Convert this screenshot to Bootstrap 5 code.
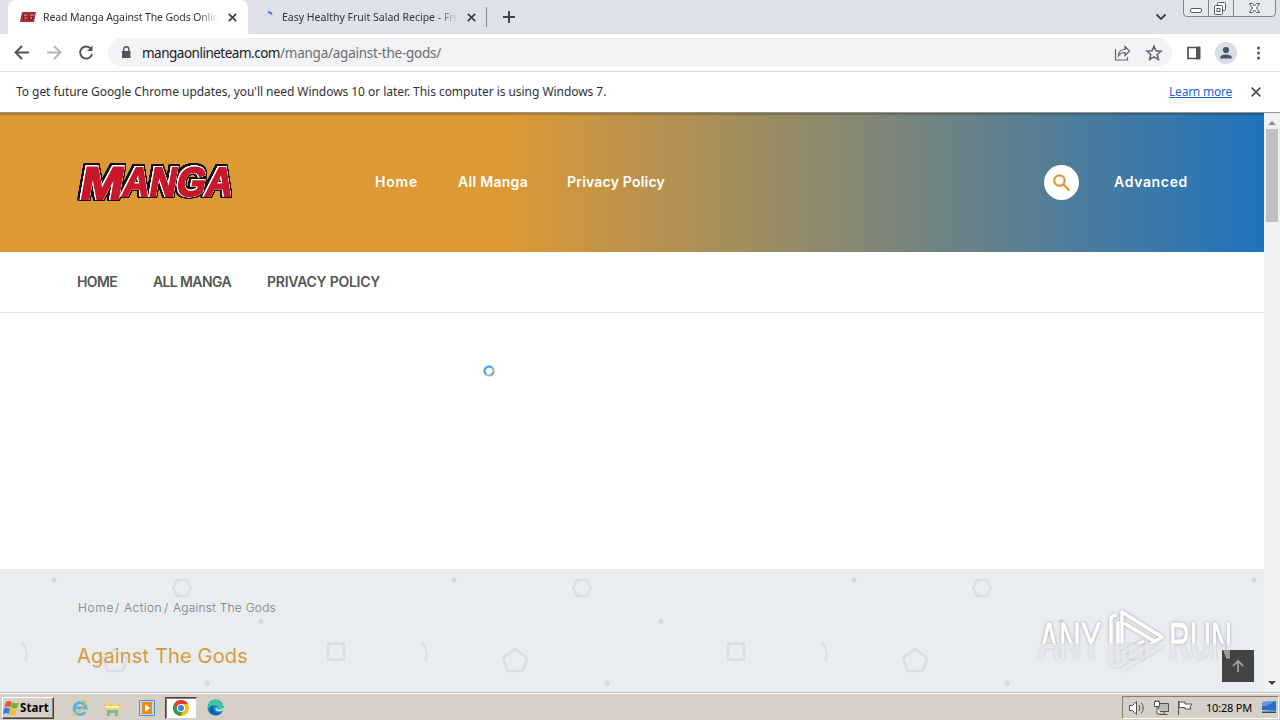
<!DOCTYPE html>
<html lang="en">
<head>
<meta charset="utf-8">
<meta name="viewport" content="width=device-width, initial-scale=1">
<title>Read Manga Against The Gods Online</title>
<link href="https://cdn.jsdelivr.net/npm/bootstrap@5.3.0/dist/css/bootstrap.min.css" rel="stylesheet">
<style>
body{width:1280px;height:720px;overflow:hidden;background:#fff;font-family:"Noto Sans","Open Sans",sans-serif;font-size:12px;color:#303238;line-height:1}
svg{display:block;flex:none}
.fx{display:block;flex:none;white-space:nowrap}
a{color:inherit;text-decoration:none}
.strip{height:34px;background:#dee1e8}
.tab-on{width:240px;height:34px;margin-left:8px;background:#fff;border-radius:8px 8px 0 0;padding-left:12px}
.tab-off{width:238px;height:34px;padding-left:14px}
.tab-text{font-size:10.5px;line-height:18px;overflow:hidden;width:176px;-webkit-mask-image:linear-gradient(90deg,#000 88%,transparent);mask-image:linear-gradient(90deg,#000 88%,transparent)}
.tab-on .tab-text{margin-left:7px;letter-spacing:-.12px}
.tab-off .tab-text{margin-left:6px}
.tab-x{margin-left:9px}
.win-buttons{left:1150px;top:0}
.toolbar{height:38px;border-bottom:1px solid #dadce0;background:#fff}
.omni{width:1064px;height:29px;border-radius:15px;background:#f1f3f4;margin-left:14px;padding-left:13px}
.url{font-size:13.5px;line-height:20px;margin-left:10px;color:#6a6e73;letter-spacing:-.24px}
.url .host{width:138px;color:#202124;letter-spacing:-.5px}
.omni-actions{margin-right:8px}
.infobar{height:41px;padding:0 19px 0 16px;background:#fff;border-bottom:1px solid #9b9589}
.infobar span{letter-spacing:-.05px}
.learn{color:#1967d2;text-decoration:underline;letter-spacing:-.23px}
.info-x{margin-left:19px}
.viewport{height:579px}
.page{width:1264px;font-family:Inter,"Open Sans",sans-serif}
.hero{height:139px;background:linear-gradient(#0004,#0000 3px),linear-gradient(90deg,#d93 0,#d93 40%,#1e73be 100%);color:#fff;font-weight:600;font-size:14px;padding-left:76px}
.logo-letters{filter:drop-shadow(.9px 0 #fff) drop-shadow(-.9px 0 #fff) drop-shadow(0 .9px #fff) drop-shadow(0 -.9px #fff) drop-shadow(1.3px 0 #111) drop-shadow(-1.3px 0 #111) drop-shadow(0 1.3px #111) drop-shadow(0 -1.3px #111)}
.menu{margin-left:137px;padding-bottom:2px}
.m-home{width:83px;letter-spacing:.79px}
.m-all{width:109px;letter-spacing:.29px}
.m-priv{letter-spacing:.21px}
.hero-right{width:220px}
.adv{margin-left:35px;letter-spacing:.66px;padding-bottom:2px}
.finder{width:35px;height:35px;border-radius:50%;background:#fff}
.subnav{height:61px;border-bottom:1px solid #e9e9e9;color:#555;font-weight:600;font-size:14px;padding-left:77px}
.s-home{width:76px;letter-spacing:-.65px}
.s-all{width:114px;letter-spacing:-.62px}
.s-priv{letter-spacing:-.25px}
.empty-area{height:256px;padding:52px 0 0 483px}
.banner{height:123px;background:#eaedf0}
.crumbs{padding:32px 0 0 78px;font-size:12px;line-height:14px;color:#777b80;font-weight:300}
.c-home{width:37px;letter-spacing:.64px}
.c-act{width:40px;letter-spacing:.45px}
.c-last{letter-spacing:.23px}
.slash{width:9px}
.title{padding:26px 0 0 77px;font-size:20px;line-height:30px;color:#d89a3c;font-weight:400;letter-spacing:.16px}
.to-top{width:32px;height:32px;right:10px;bottom:10px;background:#444}
.mark-svg{left:1034px;top:36px}
.scroll{width:16px;background:#f1f1f1;padding:7px 0 6px}
.thumb{width:12px;height:93px;background:#c1c1c1;margin-top:4px}
.taskbar{height:28px;background:#d6cfc8;border-top:1px solid #bdbcb4;box-shadow:inset 0 1px #fff}
.start{width:52px;height:22px;margin:2px 0 0 2px;border:1px solid;border-color:#fff #404040 #404040 #fff;box-shadow:inset -1px -1px #858078;color:#000;font-weight:700;font-size:11.5px}
.start span{margin-left:1px;letter-spacing:.1px}
.quick{margin:2px 0 0 16px}
.edge{margin:2px 0 0 10px}
.chromebtn{width:32px;height:22px;margin:2px 0 0 7px;background:#fff;border:1px solid #d6d3ce;border-top-color:#404040;border-left-color:#404040;box-shadow:inset 1px 1px #858078}
.tray{width:157px;height:23px;margin:2px 1px 0 0;border:1px solid;border-color:#858078 #fff #fff #858078;color:#000;font-size:11px}
.clock{margin-left:7px;letter-spacing:-.2px}
</style>
</head>
<body>
<div class="strip d-flex align-items-center position-relative">
  <div class="tab-on d-flex align-items-center">
    <svg width="16" height="12" viewBox="0 0 16 12"><path d="M2 1h14l-2 10H0z" fill="#b9293a"/><path d="M3 9l1-6h3l-1 3 2 3M9 9l1-6h4M11 6h2l-1 3H9" fill="none" stroke="#4a2a30"/><path d="M4 4h3M10 4h4M5 7h2M10 7h2" stroke="#f2c7c7" stroke-width=".8"/></svg>
    <div class="tab-text"><span class="fx">Read Manga Against The Gods Online</span></div>
    <svg class="tab-x" width="9" height="9" viewBox="0 0 9 9"><path d="M.8.8l7.400 7.400M8.200.8L.8 8.200" stroke="#3c4043" stroke-width="1.700"/></svg>
  </div>
  <div class="tab-off d-flex align-items-center">
    <svg width="14" height="16" viewBox="0 0 14 16"><path d="M6 3q3 .3 4 2.500" fill="none" stroke="#4a63e8" stroke-width="1.800"/></svg>
    <div class="tab-text"><span class="fx">Easy Healthy Fruit Salad Recipe - Fre</span></div>
    <svg class="tab-x" width="9" height="9" viewBox="0 0 9 9"><path d="M.8.8l7.400 7.400M8.200.8L.8 8.200" stroke="#3c4043" stroke-width="1.700"/></svg>
  </div>
  <svg width="40" height="22" viewBox="0 0 40 22"><path d="M.5 1v20" stroke="#888b92"/><path d="M17 11h12M23 5v12" stroke="#3c4043" stroke-width="1.900"/></svg>
  <svg class="win-buttons position-absolute" width="130" height="28" viewBox="0 0 130 28"><path d="M6.500 14.500l4.500 4.500 4.500-4.500" fill="none" stroke="#3c4043" stroke-width="1.800"/><path d="M33.500 0v13q0 3.500 3.500 3.500h85q3.500 0 3.500-3.500V0" fill="#e5e8ed" stroke="#7f848f"/><path d="M58.500 0v16M83.500 0v16" stroke="#7f848f"/><rect x="40.500" y="8.500" width="11" height="4" rx="1.500" fill="#fff" stroke="#555a64"/><rect x="67.500" y="2.500" width="8" height="8" rx="1" fill="#fff" stroke="#555a64"/><rect x="64.500" y="5.500" width="8" height="9" rx="1" fill="#fff" stroke="#555a64"/><rect x="67" y="8.500" width="3" height="3" fill="#fff" stroke="#555a64"/><path d="M99.500 3.500h3l2 2.500 2-2.500h3l-3 4.500 3 4.500h-3l-2-2.500-2 2.500h-3l3-4.500z" fill="#fff" stroke="#555a64"/></svg>
</div>
<div class="toolbar d-flex align-items-center">
  <svg width="94" height="36" viewBox="0 0 94 36" fill="none" stroke-width="1.900"><path d="M29 17.500H16M22 11l-6.500 6.500L22 24" stroke="#505357"/><path d="M47 17.500h13M54 11l6.500 6.500L54 24" stroke="#b5b7ba"/><path d="M91 14A6 6 0 1 0 92 19" stroke="#505357"/><path d="M92.500 10.500V16H87z" fill="#505357"/></svg>
  <div class="omni d-flex align-items-center">
    <svg width="11" height="14" viewBox="0 0 11 14"><path d="M1 5h8.500V12H1z" fill="#505357"/><path d="M2.800 5.500V3.300a2.500 2.500 0 0 1 5 0V5.500" fill="none" stroke="#505357" stroke-width="1.400"/></svg>
    <div class="url d-flex"><span class="host fx">mangaonlineteam.com</span><span class="fx">/manga/against-the-gods/</span></div>
    <svg class="omni-actions ms-auto" width="50" height="18" viewBox="0 0 50 18" fill="none" stroke="#5f6368" stroke-width="1.200"><path d="M1.500 5v11h12v-3M4.500 12c0-5 3-6.500 6.500-6.500V2.500L15.500 7 11 11.500V8.500C8.500 8.500 6.500 9 4.500 12z"/><path d="M40 2.200l2 4.600 5 .4-3.800 3.300 1.200 4.900-4.400-2.600-4.400 2.600 1.200-4.900L33 7.200l5-.4z" stroke-width="1.500"/></svg>
  </div>
  <svg width="108" height="30" viewBox="0 0 108 30"><path d="M16 9.500h11v11H16z" fill="none" stroke="#505357" stroke-width="1.700"/><path d="M24 8.700h4.500v12.600H24z" fill="#505357"/><circle cx="54" cy="15" r="11" fill="#d9dde6"/><circle cx="54" cy="12" r="3.100" fill="#4a5672"/><path d="M48 20.500q0-4 6-4t6 4z" fill="#4a5672"/><g fill="#505357"><circle cx="86.500" cy="10" r="1.500"/><circle cx="86.500" cy="15" r="1.500"/><circle cx="86.500" cy="20" r="1.500"/></g></svg>
</div>
<div class="infobar d-flex align-items-center">
  <span class="fx">To get future Google Chrome updates, you'll need Windows 10 or later. This computer is using Windows 7.</span>
  <a class="learn fx ms-auto" href="#">Learn more</a>
  <svg class="info-x" width="10" height="10" viewBox="0 0 10 10"><path d="M.7.7l8.600 8.600M9.300.7L.7 9.300" stroke="#505357" stroke-width="1.800"/></svg>
</div>
<div class="viewport d-flex">
  <main class="page">
    <header class="hero d-flex align-items-center">
      <svg width="162" height="42" viewBox="0 0 162 42" overflow="visible"><g class="logo-letters"><g transform="translate(5 0) skewX(-10)" font-family="'Liberation Sans',sans-serif" font-weight="700" fill="#c9182b" stroke="#c9182b" stroke-width="1.800" stroke-linejoin="miter"><text x="4" y="36.500" font-size="46" textLength="43" lengthAdjust="spacingAndGlyphs">M</text><text x="46" y="33.500" font-size="41" textLength="110" lengthAdjust="spacingAndGlyphs">ANGA</text></g></g></svg>
      <nav class="menu d-flex"><a class="m-home fx" href="#">Home</a><a class="m-all fx" href="#">All Manga</a><a class="m-priv fx" href="#">Privacy Policy</a></nav>
      <div class="hero-right d-flex align-items-center ms-auto">
        <a class="finder d-flex align-items-center justify-content-center" href="#"><svg width="18" height="18" viewBox="0 0 18 18" fill="none" stroke="#d93" stroke-width="2.200"><circle cx="6.500" cy="6.500" r="5.200"/><path d="M10.500 10.500l6 6"/></svg></a>
        <a class="adv fx" href="#">Advanced</a>
      </div>
    </header>
    <nav class="subnav d-flex align-items-center"><a class="s-home fx" href="#">HOME</a><a class="s-all fx" href="#">ALL MANGA</a><a class="s-priv fx" href="#">PRIVACY POLICY</a></nav>
    <section class="empty-area"><svg width="12" height="12" viewBox="0 0 12 12" fill="none" stroke-width="2.200"><circle cx="6" cy="6" r="4.500" stroke="#7cc6f3"/><path d="M3 9.400A4.500 4.500 0 0 1 9 2.700" stroke="#4fa5ea"/><path d="M10.400 7A4.500 4.500 0 0 1 8 10" stroke="#a09a6a"/></svg></section>
    <section class="banner position-relative">
      <svg class="position-absolute top-0 start-0" width="1264" height="123"><defs><pattern id="shapes" width="400" height="123" patternUnits="userSpaceOnUse"><g fill="none" stroke="#dcdfe2" stroke-width="2.300"><path d="M177.500 11h9l4.500 8-4.500 8h-9l-4.500-8z"/><path d="M328 74.500h16v16h-16z"/><path d="M21 73q9 9 4 19"/><path d="M115 80l12 9-4.500 13h-15L103 89z"/></g><g fill="#d8dbde"><circle cx="54" cy="11" r="2.600"/><circle cx="261" cy="52" r="2.600"/><circle cx="207.500" cy="114" r="2.600"/></g></pattern></defs><rect width="1264" height="123" fill="url(#shapes)"/><path d="M0 0h1264v5H0z" fill="#ebebeb"/></svg>
      <div class="crumbs d-flex position-relative"><a class="c-home fx" href="#">Home</a><span class="slash fx">/</span><a class="c-act fx" href="#">Action</a><span class="slash fx">/</span><a class="c-last fx" href="#">Against The Gods</a></div>
      <div class="title position-relative"><span class="fx">Against The Gods</span></div>
      <a class="to-top position-absolute d-flex align-items-center justify-content-center" href="#"><svg width="14" height="14" viewBox="0 0 14 14" fill="none" stroke="#aaa" stroke-width="1.600"><path d="M7 13V2M2 7l5-5 5 5"/></svg></a>
      <svg class="mark-svg position-absolute" width="204" height="72" viewBox="0 0 204 72"><defs><linearGradient id="fade" x1="0" y1="0" x2="0" y2="72" gradientUnits="userSpaceOnUse"><stop offset=".53" stop-color="#fff"/><stop offset=".54" stop-color="#fff" stop-opacity=".45"/></linearGradient></defs><g style="filter:drop-shadow(0 0 1.500px #0005)"><g fill="url(#fade)" stroke="url(#fade)" stroke-width=".8" font-family="'Liberation Sans',sans-serif" font-size="50"><text x="5" y="53" textLength="62" lengthAdjust="spacingAndGlyphs">ANY</text><text x="135" y="53" textLength="63" lengthAdjust="spacingAndGlyphs">RUN</text></g><g fill="none" stroke="url(#fade)" stroke-width="3.500" stroke-linejoin="round"><path d="M77 60V14q1-4 6-4M84 60V16M88 44V7l40 25-40 25M90 18l30 18M77 60l11 0M88 65l40-24M88 48l22-12"/></g></g></svg>
    </section>
  </main>
  <aside class="scroll d-flex flex-column align-items-center"><svg width="8" height="5"><path d="M0 5l4-4 4 4z" fill="#8d8d8d"/></svg><div class="thumb"></div><svg class="mt-auto" width="8" height="5"><path d="M0 0l4 4 4-4z" fill="#454545"/></svg></aside>
</div>
<footer class="taskbar d-flex align-items-center">
  <div class="start d-flex align-items-center"><svg width="16" height="16" viewBox="0 0 16 16"><path d="M3 2q3-2 5.500 0L7.500 7.500Q5 5.500 1.500 7.500z" fill="#e65a2d"/><path d="M9 2.500q3 1.500 7 0L14 8q-3 1.500-6 0z" fill="#79b52e"/><path d="M1 8.500q3-1.500 6 .2l-1.200 5.300q-2.500-1.700-6 0z" fill="#3a7fd5"/><path d="M7.500 9q3 1.500 6.200.2l-1.500 5.300q-3 1.500-6 0z" fill="#f6bd23"/></svg><span class="fx">Start</span></div>
  <svg class="quick" width="88" height="20" viewBox="0 0 88 20"><path d="M15 14a6 6 0 1 1 1-4H6" fill="none" stroke="#4db4e8" stroke-width="2.800"/><path d="M2 16Q1 18 5 16Q16 9 16 3q-2-2-6 1" fill="none" stroke="#e8bd3c" stroke-width="1.400"/><path d="M35 4h6l1 2h8v11H35z" fill="#f0d06a"/><path d="M36 8h13v2H36z" fill="#fff2b5"/><path d="M37 18v-6h11v6h-3v-3h-5v3z" fill="#6bb5dc"/><path d="M69.500 2.500h15v15h-15z" fill="#b9dcf5" stroke="#4e94cc"/><path d="M72 4h10v12H72z" fill="#f08a16"/><path d="M75 6l5 4-5 4z" fill="#fff"/></svg>
  <div class="chromebtn d-flex align-items-center justify-content-center"><svg width="16" height="16" viewBox="0 0 16 16"><circle cx="8" cy="8" r="8" fill="#f9bd15"/><path d="M1 4A8 8 0 0 1 15 4H8L4.500 10z" fill="#e33b2e"/><path d="M1 4l4.500 6 5 0L7.500 16A8 8 0 0 1 1 4z" fill="#2f9e4e"/><circle cx="8" cy="8" r="4" fill="#fff"/><circle cx="8" cy="8" r="3" fill="#397de6"/></svg></div>
  <svg class="edge" width="17" height="17" viewBox="0 0 17 17"><circle cx="8.500" cy="8.500" r="8" fill="#1687d0"/><path d="M1 6Q4 0 10 .8q6 1.200 6.500 7-1 3.500-6 2.700 1.500-4-3-4.500Q3 6 1 9z" fill="#3cc7a0"/><path d="M6 9q0 5 8 5-6 5-11-1-1-5 3-6z" fill="#0f5daa"/><path d="M9 8q-2 4 3.500 4.500l4-1.500v-2q-3 2.500-6 1.500z" fill="#d6e8ec"/></svg>
  <div class="tray d-flex align-items-center ms-auto">
    <svg width="76" height="20" viewBox="0 0 76 20" fill="#fff" stroke="#55534f"><path d="M6.500 7.500h3l4-4v13l-4-4h-3z"/><path d="M16 7q2 3 0 6M18.500 5q3.500 5 0 10" fill="none"/><path d="M35.500 5.500h10v8h-10z" fill="#b9b9b5"/><path d="M32.500 2v2M35.500 2v2M31.500 3.500v5h5v-5zM34 8.500V16h4M36.500 16.500h8M41 14v2"/><path d="M55.500 3v14M56 4h6v2h7l-2 3 1 2h-6V9.500h-6z"/></svg>
    <span class="clock fx">10:28 PM</span>
    <svg class="ms-auto" width="17" height="15" viewBox="0 0 17 15"><path d="M1 2l14-1v10l-14-1z" fill="#2c6fca"/><path d="M1 2l14-1-10 5-4 0z" fill="#5b9be6"/><path d="M1 11.500h14v1.500H1z" fill="#254a7c"/></svg>
  </div>
</footer>
<script src="https://cdn.jsdelivr.net/npm/bootstrap@5.3.0/dist/js/bootstrap.bundle.min.js"></script>
</body>
</html>
